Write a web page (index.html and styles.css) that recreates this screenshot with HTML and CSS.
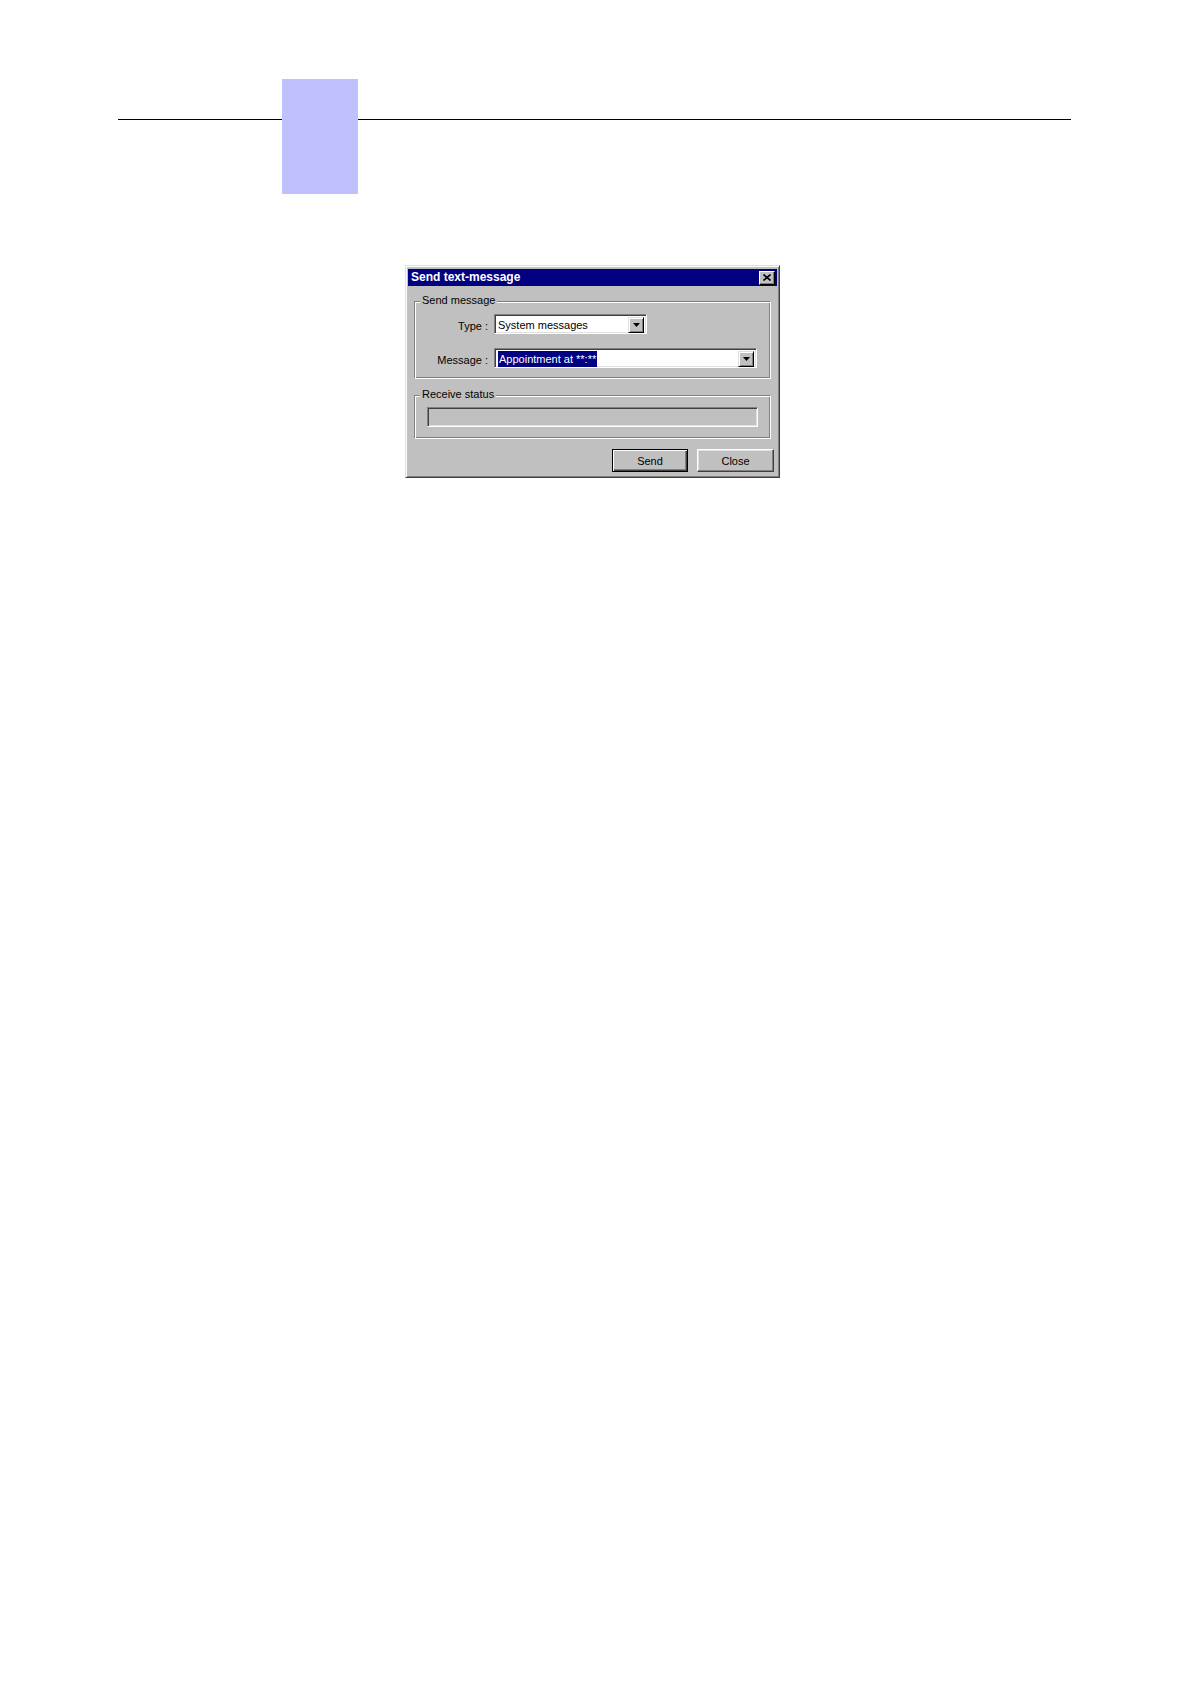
FILE: index.html
```html
<!DOCTYPE html>
<html>
<head>
<meta charset="utf-8">
<title>Send text-message</title>
<link rel="stylesheet" href="styles.css">
</head>
<body>
<div class="page">
  <div class="rule"></div>
  <div class="tab"></div>

  <div class="dialog">
    <div class="titlebar">
      <span class="title">Send text-message</span>
      <span class="xbtn">
        <svg width="8" height="7" viewBox="0 0 8 7"><path d="M0.5 0.5 L7.5 6.5 M7.5 0.5 L0.5 6.5" stroke="#000" stroke-width="1.6" fill="none"/></svg>
      </span>
    </div>
    <div class="body">
      <div class="group group-send">
        <span class="glabel">Send message</span>
        <div class="form">
          <span class="flabel">Type :</span>
          <div class="combo combo-type">
            <span class="ctext">System messages</span>
            <span class="dbtn"><svg width="7" height="4" viewBox="0 0 7 4"><path d="M0 0 H7 L3.5 4 Z" fill="#000"/></svg></span>
          </div>
          <span class="flabel">Message :</span>
          <div class="combo combo-msg">
            <span class="ctext"><span class="sel">Appointment at **:**</span></span>
            <span class="dbtn"><svg width="7" height="4" viewBox="0 0 7 4"><path d="M0 0 H7 L3.5 4 Z" fill="#000"/></svg></span>
          </div>
        </div>
      </div>
      <div class="group group-status">
        <span class="glabel">Receive status</span>
        <div class="status"></div>
      </div>
      <div class="buttons">
        <span class="btn btn-default">Send</span>
        <span class="btn">Close</span>
      </div>
    </div>
  </div>
</div>
</body>
</html>
```
FILE: styles.css
```css
html, body {
  margin: 0;
  padding: 0;
  background: #fff;
}
body {
  width: 1190px;
  min-height: 1684px;
  font-family: "Liberation Sans", Arial, sans-serif;
  font-size: 11px;
  color: #000;
}
.page {
  position: relative;
  padding-top: 119px;
}
.rule {
  margin-left: 118px;
  width: 953px;
  height: 0;
  border-top: 1px solid #000;
}
.tab {
  position: absolute;
  left: 282px;
  top: 79px;
  width: 76px;
  height: 115px;
  background: #c0c0ff;
}
.dialog {
  margin: 145px 0 0 405px;
  width: 375px;
  height: 213px;
  box-sizing: border-box;
  background: #c0c0c0;
  border: 1px solid;
  border-color: #dfdfdf #404040 #404040 #dfdfdf;
  box-shadow: inset 1px 1px #fff, inset -1px -1px #808080;
  padding: 3px 2px 0 2px;
}
.titlebar {
  height: 17px;
  background: #000080;
  display: flex;
  align-items: center;
  justify-content: space-between;
  padding: 0 2px 0 3px;
}
.title {
  color: #fff;
  font-weight: bold;
  font-size: 12px;
  line-height: 17px;
}
.xbtn {
  width: 16px;
  height: 14px;
  box-sizing: border-box;
  background: #c0c0c0;
  border: 1px solid;
  border-color: #fff #000 #000 #fff;
  box-shadow: inset -1px -1px #808080;
  display: flex;
  align-items: center;
  justify-content: center;
}
.body {
  padding: 15px 6px 5px 6px;
}
.group {
  position: relative;
  border: 1px solid;
  border-color: #808080 #fff #fff #808080;
  box-shadow: inset 1px 1px #fff, inset -1px -1px #808080;
}
.glabel {
  position: absolute;
  left: 5px;
  top: -8px;
  padding: 0 2px;
  background: #c0c0c0;
  line-height: 13px;
}
.group-send {
  height: 78px;
  box-sizing: border-box;
  padding: 12px 0 0 0;
}
.form {
  display: grid;
  grid-template-columns: 73px auto;
  column-gap: 6px;
  row-gap: 14px;
  align-items: center;
}
.flabel {
  text-align: right;
  padding-top: 4px;
}
.combo {
  display: flex;
  height: 20px;
  box-sizing: border-box;
  border: 1px solid;
  border-color: #808080 #fff #fff #808080;
  box-shadow: inset 1px 1px #404040, inset -1px -1px #dfdfdf;
  background: #fff;
  padding: 2px;
}
.combo-type { width: 153px; }
.combo-msg { width: 263px; }
.ctext {
  flex: 1;
  line-height: 16px;
  padding-left: 1px;
  white-space: nowrap;
}
.sel {
  background: #000080;
  color: #fff;
  padding: 0 1px 0 1px;
  display: inline-block;
  line-height: 16px;
}
.dbtn {
  width: 16px;
  height: 16px;
  box-sizing: border-box;
  background: #c0c0c0;
  border: 1px solid;
  border-color: #dfdfdf #000 #000 #dfdfdf;
  box-shadow: inset 1px 1px #fff, inset -1px -1px #808080;
  display: flex;
  align-items: center;
  justify-content: center;
}
.group-status {
  margin-top: 16px;
  height: 44px;
  box-sizing: border-box;
  padding: 11px 12px 0 12px;
}
.status {
  height: 20px;
  box-sizing: border-box;
  border: 1px solid;
  border-color: #808080 #fff #fff #808080;
  box-shadow: inset 1px 1px #404040, inset -1px -1px #dfdfdf;
}
.buttons {
  margin-top: 10px;
  margin-right: -3px;
  display: flex;
  justify-content: flex-end;
  gap: 9px;
}
.btn {
  width: 77px;
  height: 23px;
  box-sizing: border-box;
  display: flex;
  align-items: center;
  justify-content: center;
  border: 1px solid;
  border-color: #fff #404040 #404040 #fff;
  box-shadow: inset -1px -1px #808080, inset 1px 1px #dfdfdf;
}
.btn-default {
  width: 76px;
  border-color: #000;
  box-shadow: inset 1px 1px #fff, inset -1px -1px #404040, inset -2px -2px #808080;
}
```
